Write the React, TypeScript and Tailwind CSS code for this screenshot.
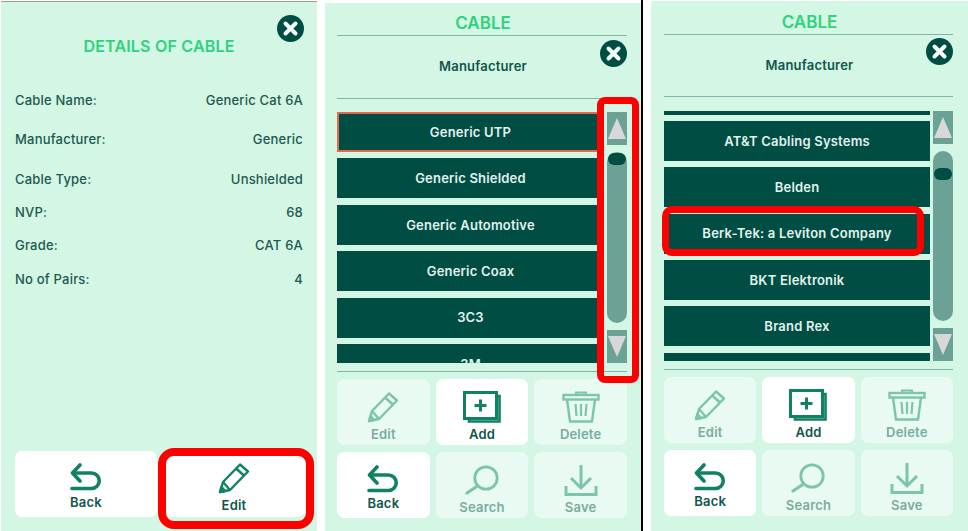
import React from "react";

const Close = ({ className }: { className: string }) => (
  <svg viewBox="0 0 27 27" className={className}>
    <circle cx="13.5" cy="13.5" r="13.5" fill="#004d44" />
    <path d="M8.5 8.5L18.5 18.5M18.5 8.5L8.5 18.5" stroke="#f4fbf8" strokeWidth="4" strokeLinecap="round" />
  </svg>
);

const BackIcon = () => (
  <svg viewBox="0 0 32 28" className="h-[28px] w-[32px]" fill="none" stroke="#0f8263" strokeWidth="3.6">
    <path d="M10 2L2.5 10L10 18" strokeLinecap="round" strokeLinejoin="round" />
    <path d="M3 10H21.5a7.5 7.5 0 0 1 0 15.5H2" strokeLinecap="round" />
  </svg>
);

const PencilIcon = ({ color }: { color: string }) => (
  <svg viewBox="0 0 32 32" className="h-[32px] w-[32px]" fill="none" stroke={color} strokeWidth="2.4" strokeLinejoin="round">
    <path d="M2 30L5 20L22 2.5L30 9.5L12 28Z" />
    <path d="M18 6.5L26 13.5M5 20L12 28" />
    <path d="M2 30L3.5 25L7 29Z" fill={color} />
  </svg>
);

const AddIcon = () => (
  <svg viewBox="0 0 38 32" className="h-[32px] w-[38px]" fill="none" stroke="#0f8263">
    <rect x="1.5" y="1.5" width="32" height="26" strokeWidth="3" />
    <path d="M33.5 5H36.5V30.5H6V27.5" strokeWidth="2.6" />
    <path d="M17.5 8.5V20.5M11.5 14.5H23.5" strokeWidth="3" />
  </svg>
);

const TrashIcon = () => (
  <svg viewBox="0 0 38 32" className="h-[32px] w-[38px]" fill="none" stroke="#7cc4ab">
    <path d="M14 4V1.5H24V4" strokeWidth="2" />
    <rect x="1.5" y="4" width="35" height="4.5" strokeWidth="2.4" />
    <path d="M5 8.5L8 30.5H30L33 8.5" strokeWidth="2.4" />
    <path d="M13.5 13L14.5 25M19 13V25M24.5 13L23.5 25" strokeWidth="2.2" />
  </svg>
);

const SearchIcon = () => (
  <svg viewBox="0 0 34 30" className="h-[30px] w-[34px]" fill="none" stroke="#7cc4ab" strokeLinecap="round">
    <circle cx="21" cy="13" r="11.2" strokeWidth="2.8" />
    <path d="M12.5 21L2 28" strokeWidth="3.2" />
  </svg>
);

const SaveIcon = () => (
  <svg viewBox="0 0 34 33" className="h-[33px] w-[34px]" fill="none" stroke="#7cc4ab" strokeWidth="3">
    <path d="M17 1V23" />
    <path d="M7 14L17 24L27 14" strokeLinejoin="round" />
    <path d="M2 22V30.5H32V22" />
  </svg>
);

const ActionButton = ({
  icon,
  label,
  disabled,
  iconBox,
  labelClass,
}: {
  icon: React.ReactNode;
  label: string;
  disabled?: boolean;
  iconBox: string;
  labelClass: string;
}) => (
  <div
    className={`flex h-[66px] flex-col items-center rounded-[7px] ${
      disabled ? "bg-[#e8faf2] text-[#78ad9e]" : "bg-white text-[#10564b]"
    }`}
  >
    <div className={`flex items-end justify-center ${iconBox}`}>{icon}</div>
    <div className={`text-[13px] leading-[16px] font-semibold tracking-[0.2px] ${labelClass}`}>{label}</div>
  </div>
);

const Row = ({ label, value, className }: { label: string; value: string; className: string }) => (
  <div className={`flex items-center justify-between text-[13px] leading-[20px] font-medium tracking-[0.2px] text-[#20594f] ${className}`}>
    <span>{label}</span>
    <span>{value}</span>
  </div>
);

const ListItem = ({ label, selected }: { label: string; selected?: boolean }) => (
  <div
    className={`flex h-[40px] shrink-0 items-center justify-center bg-[#004d44] pt-[1px] text-[13px] font-semibold tracking-[0.2px] text-[#e2f2ec] ${
      selected ? "border-2 border-[#e8674f]" : ""
    }`}
  >
    {label}
  </div>
);

const Arrow = ({ up }: { up?: boolean }) => (
  <div className="flex h-[33px] shrink-0 items-center justify-center bg-[#6ba295]">
    <div
      className={`h-0 w-0 border-x-[9px] border-x-transparent ${
        up ? "border-b-[21px] border-b-[#d8d8d8]" : "border-t-[21px] border-t-[#d8d8d8]"
      }`}
    />
  </div>
);

const ManufacturerPanel = ({
  shell,
  headerHeight,
  closeClass,
  listShell,
  trackClass,
  scrollClass,
  items,
  selected,
  children,
}: {
  shell: string;
  headerHeight: string;
  closeClass: string;
  listShell: string;
  trackClass: string;
  scrollClass: string;
  items: string[];
  selected?: string;
  children?: React.ReactNode;
}) => (
  <div className={`relative shrink-0 bg-[#d3f6e5] ${shell}`}>
    <div className="h-[24px] pl-[2px] text-center text-[17px] leading-[24px] font-semibold text-[#2dd37c]">CABLE</div>
    <div className={`relative flex items-center justify-center border-y-[1.5px] border-[#7fb5a5] pl-[2px] ${headerHeight}`}>
      <span className="text-[13px] font-semibold tracking-[0.2px] text-[#10564b]">Manufacturer</span>
      <Close className={`absolute right-0 h-[27px] w-[27px] ${closeClass}`} />
    </div>
    <div className={`flex gap-[3px] ${listShell}`}>
      <div className="h-full w-[267px] overflow-hidden">
        <div className={`flex flex-col gap-[6.4px] ${scrollClass}`}>
          {items.map((item, i) => (
            <ListItem key={i} label={item} selected={item === selected} />
          ))}
        </div>
      </div>
      <div className="flex w-[20px] flex-col justify-between">
        <Arrow up />
        <div className={`rounded-[10px] bg-[#6ba295] ${trackClass}`}>
          <div className="mx-[1px] h-[12px] rounded-full bg-[#004d44]" />
        </div>
        <Arrow />
      </div>
    </div>
    <div className="mt-[8px] border-t-[1.5px] border-[#7fb5a5]" />
    <div className="mt-[7px] grid grid-cols-3 gap-x-[6px] gap-y-[7px]">
      <ActionButton icon={<PencilIcon color="#7cc4ab" />} label="Edit" disabled iconBox="h-[44px]" labelClass="mt-[3px]" />
      <ActionButton icon={<AddIcon />} label="Add" iconBox="h-[44px]" labelClass="mt-[3px]" />
      <ActionButton icon={<TrashIcon />} label="Delete" disabled iconBox="h-[44px]" labelClass="mt-[3px]" />
      <ActionButton icon={<BackIcon />} label="Back" iconBox="h-[41px]" labelClass="mt-[2px]" />
      <ActionButton icon={<SearchIcon />} label="Search" disabled iconBox="h-[43px]" labelClass="mt-[4px]" />
      <ActionButton icon={<SaveIcon />} label="Save" disabled iconBox="h-[45px]" labelClass="mt-[2px]" />
    </div>
    {children}
  </div>
);

export default function App() {
  return (
    <div className="flex h-[531px] w-[968px] overflow-hidden bg-white font-['Inter',sans-serif]">
      <div className="relative mt-[1px] ml-[1px] flex h-[530px] w-[316px] shrink-0 flex-col border-t border-[#9a9a9a] bg-[#d3f6e5] pr-[14px] pl-[14px]">
        <Close className="absolute top-[13px] right-[13px] h-[27px] w-[27px]" />
        <h1 className="mt-[34px] text-center text-[16px] leading-[20px] font-semibold tracking-[0.2px] text-[#2dd37c]">
          DETAILS OF CABLE
        </h1>
        <Row label="Cable Name:" value="Generic Cat 6A" className="mt-[34px]" />
        <Row label="Manufacturer:" value="Generic" className="mt-[19px]" />
        <Row label="Cable Type:" value="Unshielded" className="mt-[20px]" />
        <Row label="NVP:" value="68" className="mt-[13px]" />
        <Row label="Grade:" value="CAT 6A" className="mt-[13px]" />
        <Row label="No of Pairs:" value="4" className="mt-[14px]" />
        <div className="mt-auto -mr-[2px] mb-[14px] grid grid-cols-2 gap-x-[6px]">
          <ActionButton icon={<BackIcon />} label="Back" iconBox="h-[40px]" labelClass="mt-[3px]" />
          <ActionButton icon={<PencilIcon color="#0f8263" />} label="Edit" iconBox="h-[43px]" labelClass="mt-[3px]" />
        </div>
        <div className="absolute top-[446px] left-[157px] h-[81px] w-[156px] rounded-[16px] border-[8px] border-[#ff0000]" />
      </div>

      <ManufacturerPanel
        shell="mt-[3px] ml-[8px] h-[528px] w-[316px] pt-[8px] pr-[14px] pl-[12px]"
        headerHeight="h-[64px]"
        closeClass="top-[4px]"
        listShell="mt-[13px] h-[251px]"
        trackClass="h-[171px] pt-[1px]"
        scrollClass=""
        items={["Generic UTP", "Generic Shielded", "Generic Automotive", "Generic Coax", "3C3", "3M"]}
        selected="Generic UTP"
      >
        <div className="absolute top-[94px] left-[272px] h-[286px] w-[42px] rounded-[8px] border-[7px] border-[#ff0000]" />
      </ManufacturerPanel>

      <div className="h-[531px] w-[2px] shrink-0 bg-black" />

      <ManufacturerPanel
        shell="mt-[1px] ml-[8px] h-[530px] w-[317px] pt-[9px] pr-[15px] pl-[13px]"
        headerHeight="h-[63px]"
        closeClass="top-[3px]"
        listShell="mt-[14px] h-[250px]"
        trackClass="h-[170px] pt-[17px]"
        scrollClass="-mt-[36.5px]"
        items={["", "AT&T Cabling Systems", "Belden", "Berk-Tek: a Leviton Company", "BKT Elektronik", "Brand Rex", ""]}
      >
        <div className="absolute top-[205px] left-[11px] h-[50px] w-[262px] rounded-[10px] border-[7px] border-[#ff0000]" />
      </ManufacturerPanel>
    </div>
  );
}
